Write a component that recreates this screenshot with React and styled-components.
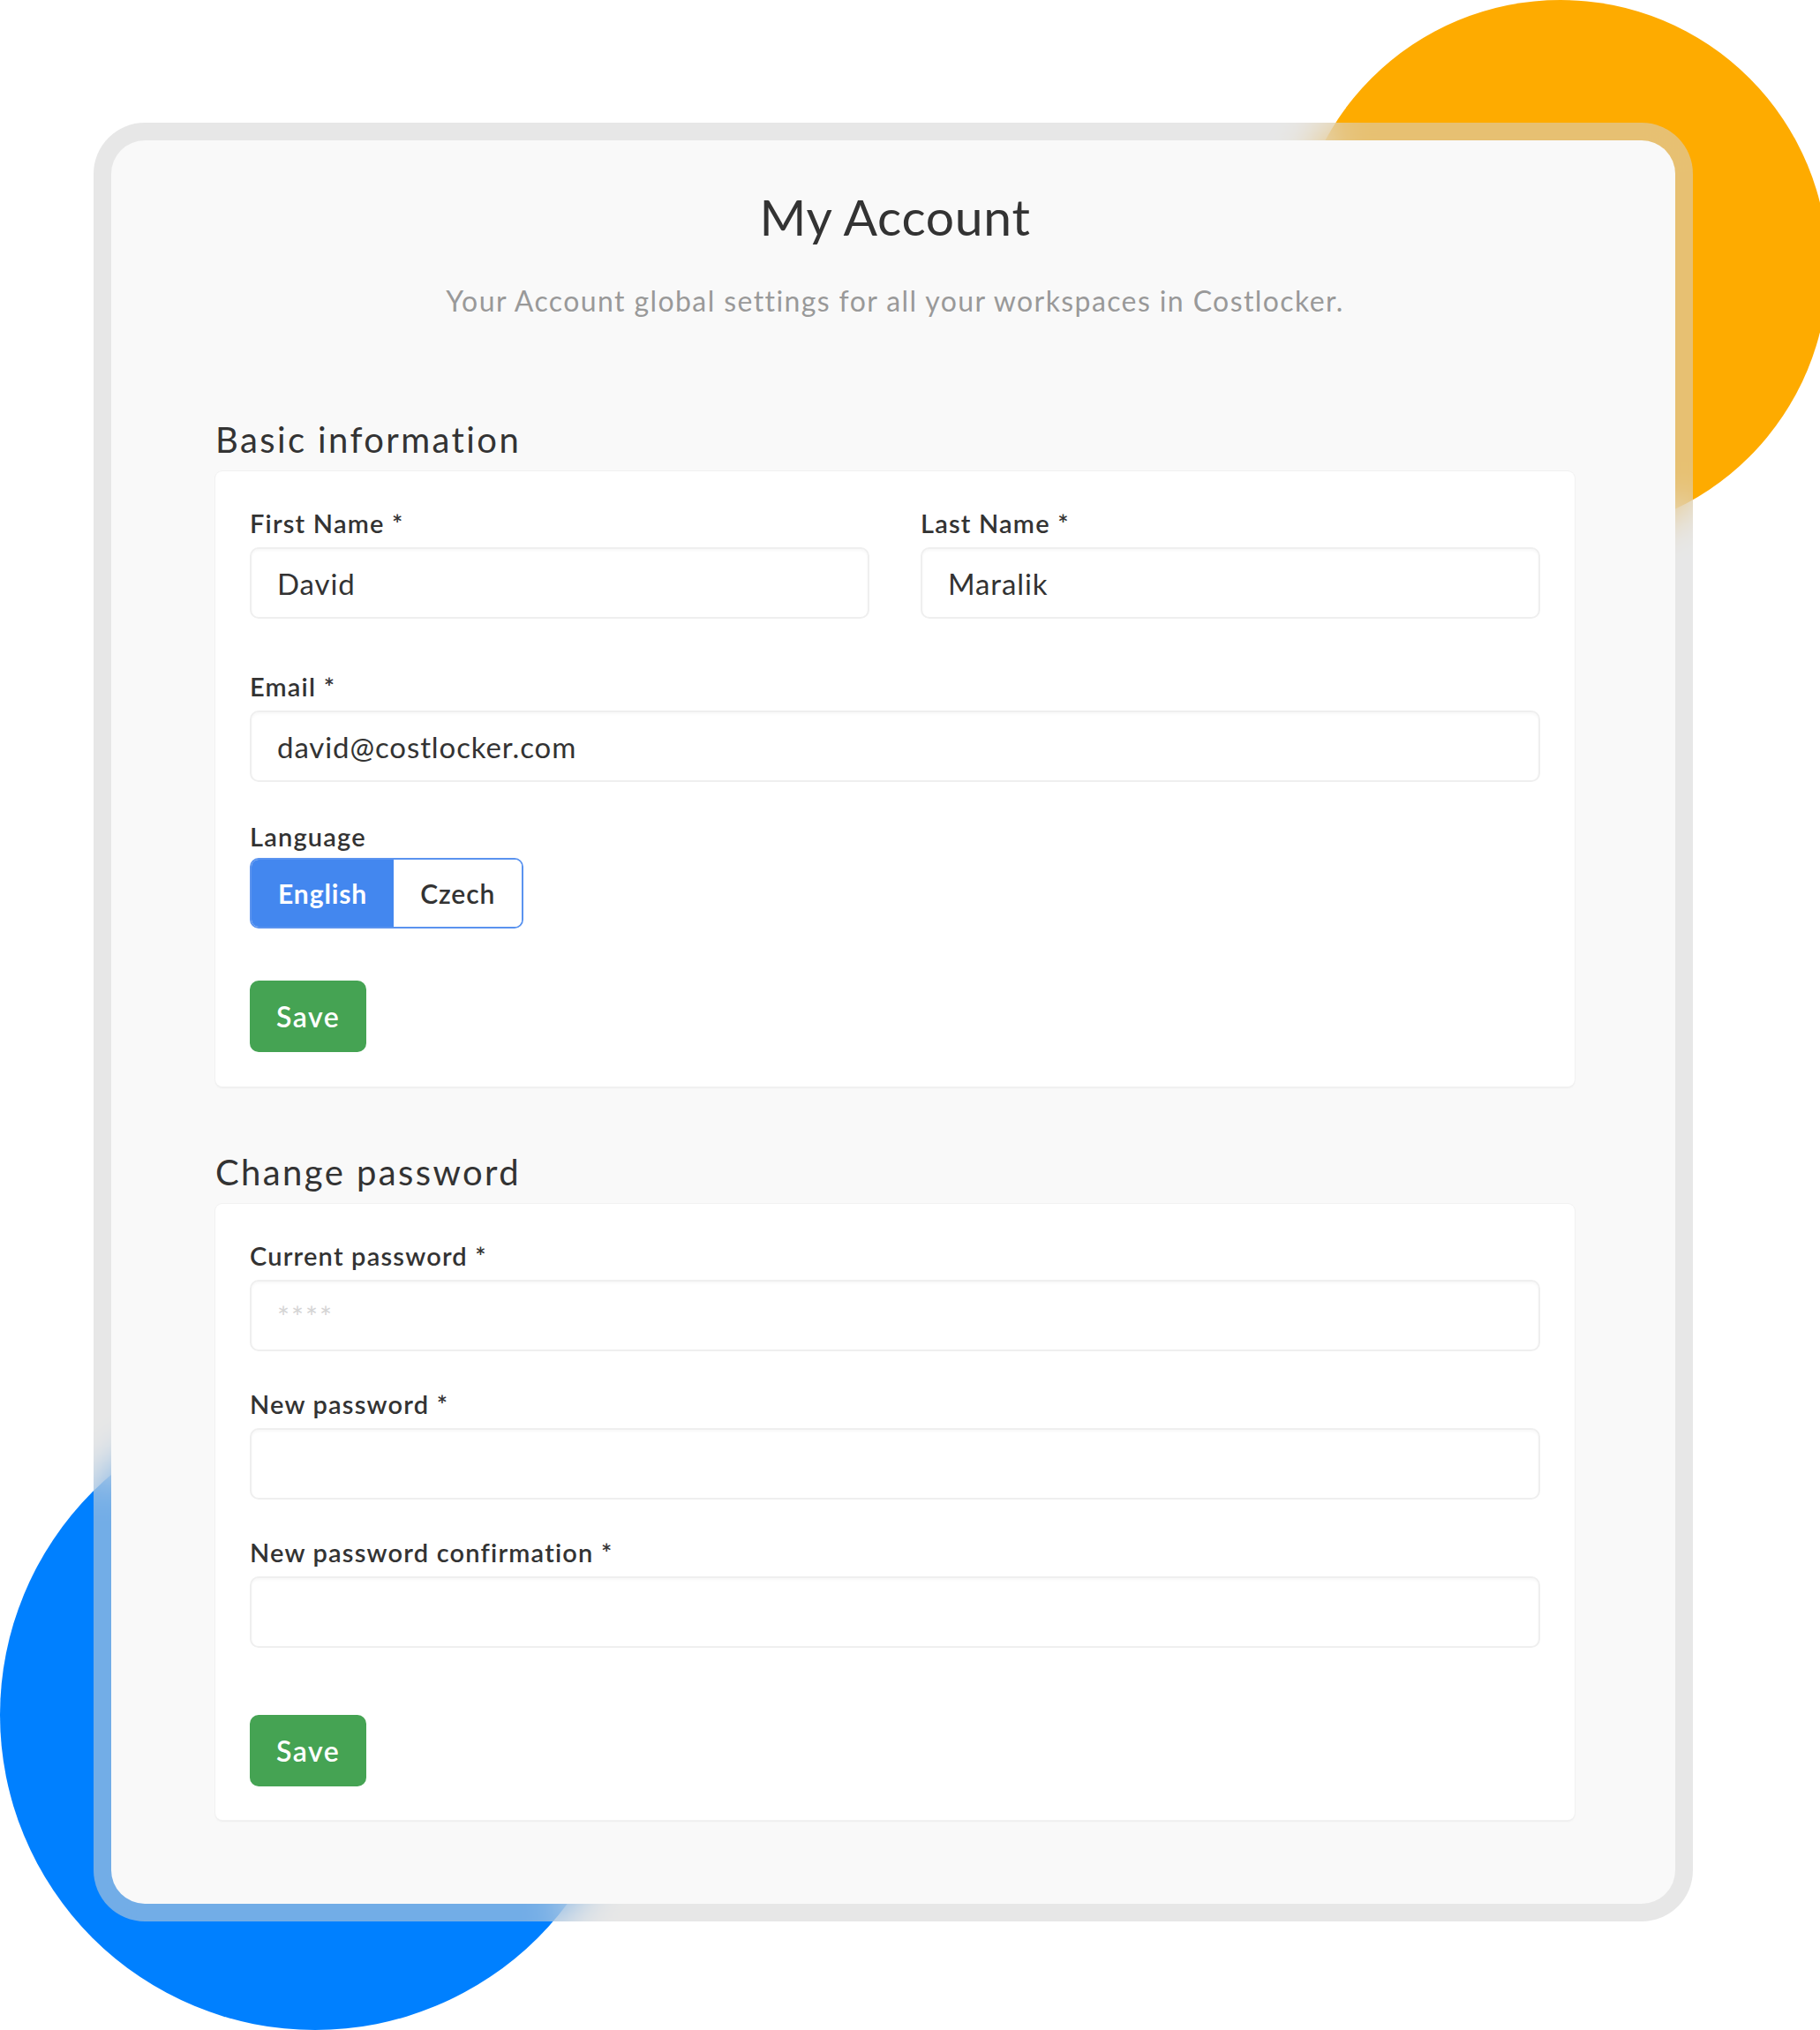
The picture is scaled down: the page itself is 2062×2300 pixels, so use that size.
import React from "react";
import styled, { createGlobalStyle } from "styled-components";

const GlobalStyle = createGlobalStyle`
  html, body { margin: 0; padding: 0; background: #ffffff; }
  body { font-family: "Lato", "Open Sans", "Liberation Sans", sans-serif; }
  * { box-sizing: border-box; }
`;

const Page = styled.div`
  position: relative;
  width: 2062px;
  height: 2300px;
  overflow: hidden;
  padding: 139px 144px 0 106px;
  background: #ffffff;
`;

const Blob = styled.div`
  position: absolute;
  z-index: 0;
  left: ${(p) => p.$left}px;
  top: ${(p) => p.$top}px;
  width: ${(p) => p.$size}px;
  height: ${(p) => p.$size}px;
  border-radius: 50%;
  background: ${(p) => p.$color};
`;

const Frame = styled.div`
  position: relative;
  z-index: 1;
  width: 1812px;
  padding: 20px;
  border-radius: 58px;
  background: rgba(211, 211, 211, 0.54);
  backdrop-filter: blur(24px);
  -webkit-backdrop-filter: blur(24px);
`;

const Sheet = styled.div`
  background: #f9f9f9;
  border-radius: 38px;
  padding: 52px 114px 95px 118px;
`;

const Title = styled.h1`
  margin: 0;
  font-size: 57px;
  line-height: 68px;
  font-weight: 400;
  letter-spacing: 0.7px;
  color: #333333;
  text-align: center;
`;

const Subtitle = styled.p`
  margin: 42px 0 0;
  font-size: 32px;
  line-height: 40px;
  letter-spacing: 1.4px;
  color: #999999;
  text-align: center;
`;

const SectionTitle = styled.h2`
  margin: ${(p) => p.$top}px 0 14px;
  font-size: 40px;
  line-height: 44px;
  font-weight: 400;
  letter-spacing: 2.4px;
  color: #333333;
`;

const Panel = styled.section`
  background: #ffffff;
  border-radius: 8px;
  padding: 41px 39px ${(p) => p.$bottom}px;
  box-shadow: 0 0 0 1px #f1f1f1, 0 2px 2px rgba(0, 0, 0, 0.05);
`;

const Row = styled.div`
  display: grid;
  grid-template-columns: 1fr 1fr;
  column-gap: 58px;
  margin-bottom: 59px;
`;

const Group = styled.div`
  margin-bottom: ${(p) => p.$mb ?? 0}px;
`;

const Label = styled.label`
  display: block;
  margin-bottom: ${(p) => p.$gap ?? 9}px;
  font-size: 29px;
  line-height: 36px;
  font-weight: 600;
  letter-spacing: 1.2px;
  color: #333333;
`;

const Input = styled.input`
  display: block;
  width: 100%;
  height: 81px;
  padding: 0 29px;
  border: 2px solid #efefef;
  border-radius: 10px;
  background: #ffffff;
  box-shadow: inset 0 2px 3px rgba(0, 0, 0, 0.03);
  font-family: inherit;
  font-size: 33px;
  letter-spacing: 0.9px;
  color: #333333;
  outline: none;

  &::placeholder {
    color: #d4d4d4;
    letter-spacing: 2px;
  }
`;

const Toggle = styled.div`
  display: inline-flex;
  height: 80px;
  border: 2px solid #5a93ef;
  border-radius: 10px;
  overflow: hidden;
`;

const ToggleButton = styled.button`
  display: flex;
  align-items: center;
  padding: 0 30px;
  border: none;
  background: ${(p) => (p.$active ? "#4387ef" : "#ffffff")};
  color: ${(p) => (p.$active ? "#ffffff" : "#333333")};
  font-family: inherit;
  font-size: 30px;
  font-weight: ${(p) => (p.$active ? 700 : 600)};
  letter-spacing: 0.9px;
  cursor: pointer;
`;

const SaveButton = styled.button`
  display: block;
  height: 81px;
  margin-top: ${(p) => p.$top}px;
  padding: 0 30px;
  border: none;
  border-radius: 10px;
  background: #45a353;
  color: #ffffff;
  font-family: inherit;
  font-size: 32px;
  font-weight: 600;
  letter-spacing: 1.5px;
  cursor: pointer;
`;

export default function App() {
  return (
    <>
      <GlobalStyle />
      <Page>
        <Blob $left={1465} $top={0} $size={606} $color="#feab00" />
        <Blob $left={0} $top={1586} $size={714} $color="#0080ff" />
        <Frame>
          <Sheet>
            <Title>My Account</Title>
            <Subtitle>
              Your Account global settings for all your workspaces in Costlocker.
            </Subtitle>

            <SectionTitle $top={115}>Basic information</SectionTitle>
            <Panel $bottom={39}>
              <Row>
                <Group>
                  <Label>First Name *</Label>
                  <Input defaultValue="David" />
                </Group>
                <Group>
                  <Label>Last Name *</Label>
                  <Input defaultValue="Maralik" />
                </Group>
              </Row>
              <Group $mb={44}>
                <Label>Email *</Label>
                <Input defaultValue="david@costlocker.com" />
              </Group>
              <Group>
                <Label $gap={6}>Language</Label>
                <Toggle>
                  <ToggleButton $active>English</ToggleButton>
                  <ToggleButton>Czech</ToggleButton>
                </Toggle>
              </Group>
              <SaveButton $top={59}>Save</SaveButton>
            </Panel>

            <SectionTitle $top={75}>Change password</SectionTitle>
            <Panel $bottom={38}>
              <Group $mb={42}>
                <Label>Current password *</Label>
                <Input type="password" placeholder="****" />
              </Group>
              <Group $mb={42}>
                <Label>New password *</Label>
                <Input type="password" />
              </Group>
              <Group>
                <Label>New password confirmation *</Label>
                <Input type="password" />
              </Group>
              <SaveButton $top={76}>Save</SaveButton>
            </Panel>
          </Sheet>
        </Frame>
      </Page>
    </>
  );
}
